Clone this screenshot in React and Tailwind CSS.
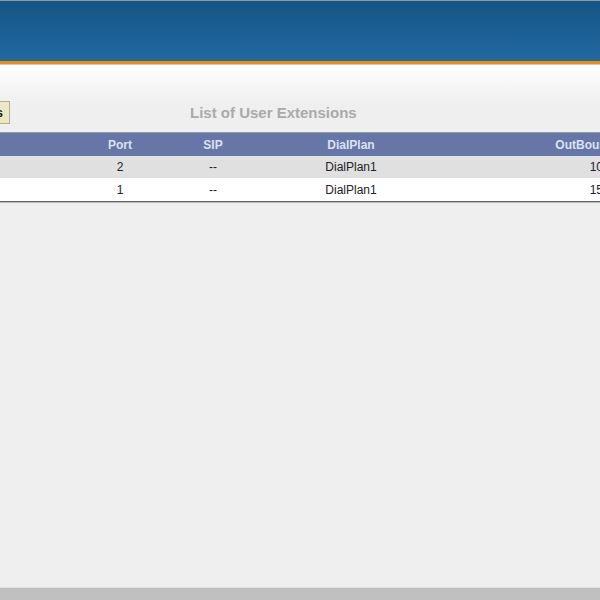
export default function App() {
  const rows = [
    { ext: "101", name: "User2", port: "2", sip: "--", plan: "DialPlan1", out: "1001", bg: "bg-[#e0e0e0]", h: "h-[22px]" },
    { ext: "102", name: "User1", port: "1", sip: "--", plan: "DialPlan1", out: "1501", bg: "bg-white", h: "h-[23px]" },
  ];
  return (
    <div className="h-[600px] w-[600px] overflow-hidden bg-[#efefef] flex flex-col font-['Liberation_Sans',Arial,sans-serif]">
      <div className="h-px bg-[#8d9aa6]" />
      <div className="h-[60px] bg-gradient-to-b from-[#165584] to-[#216aa2]" />
      <div className="h-[3px] bg-[#f28c00]" />
      <div className="h-px bg-[#b4d0e4]" />
      <div className="flex-1 flex flex-col bg-[linear-gradient(to_bottom,#ffffff,#efefef_38px)]">
        <div className="mt-[36px] h-[23px] flex items-center">
          <div className="w-[10px] h-full flex justify-end shrink-0">
            <button className="h-[23px] px-[6px] whitespace-nowrap bg-[#ece7c4] border border-[#b3ae8c] text-[12px] font-bold text-[#1a1a1a] leading-none shrink-0">
              Extensions
            </button>
          </div>
          <div className="ml-[180px] pt-[2px] text-[15px] font-bold text-[#aaaaaa] whitespace-nowrap">
            List of User Extensions
          </div>
        </div>
        <div className="mt-[8px] ml-[-120px] w-[885px] shrink-0">
          <div className="h-px bg-[#9a9a9a]" />
          <div className="h-[23px] bg-[#6676a6] flex items-center text-[12px] font-bold text-[#dbe2f3]">
            <div className="w-[195px] pl-2 text-left">Name</div>
            <div className="w-[90px] text-center">Port</div>
            <div className="w-[96px] text-center">SIP</div>
            <div className="w-[180px] text-center">DialPlan</div>
            <div className="w-[324px] text-center">OutBound Prefix</div>
          </div>
          {rows.map((r) => (
            <div key={r.port} className={`${r.h} ${r.bg} flex items-center text-[12px] text-[#222222]`}>
              <div className="w-[195px] pl-2 text-left">{r.name}</div>
              <div className="w-[90px] text-center">{r.port}</div>
              <div className="w-[96px] text-center">{r.sip}</div>
              <div className="w-[180px] text-center">{r.plan}</div>
              <div className="w-[324px] text-center">{r.out}</div>
            </div>
          ))}
          <div className="h-px bg-[#666666]" />
          <div className="h-px bg-[#bbbbbb]" />
        </div>
        <div className="flex-1" />
      </div>
      <div className="h-px bg-[#e2e2e2]" />
      <div className="h-[12px] bg-[#c0c0c0]" />
    </div>
  );
}
